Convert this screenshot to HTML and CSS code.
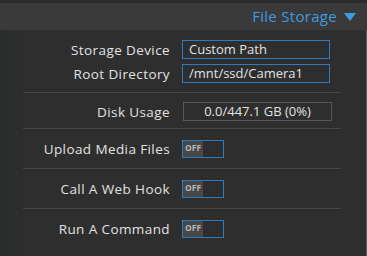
FILE: index.html
```html
<!DOCTYPE html>
<html lang="en">
<head>
    <meta charset="UTF-8">
    <title>File Storage</title>
    <link rel="stylesheet" href="styles.css">
</head>
<body>
    <div class="topbar"></div>
    <div class="header">
        <span class="header-title">File Storage</span>
        <span class="caret"></span>
    </div>

    <div class="page">
        <div class="sidebar"></div>
        <div class="content">
            <div class="section first">
                <div class="row">
                    <label>Storage Device</label>
                    <div class="field">Custom Path</div>
                </div>
                <div class="row">
                    <label>Root Directory</label>
                    <div class="field">/mnt/ssd/Camera1</div>
                </div>
            </div>

            <div class="section disk">
                <div class="row">
                    <label>Disk Usage</label>
                    <div class="usage">0.0/447.1 GB (0%)</div>
                </div>
            </div>

            <div class="section toggle-row">
                <div class="row">
                    <label>Upload Media Files</label>
                    <div class="toggle"><span class="off">OFF</span></div>
                </div>
            </div>

            <div class="section toggle-row">
                <div class="row">
                    <label>Call A Web Hook</label>
                    <div class="toggle"><span class="off">OFF</span></div>
                </div>
            </div>

            <div class="section toggle-row last">
                <div class="row">
                    <label>Run A Command</label>
                    <div class="toggle"><span class="off">OFF</span></div>
                </div>
            </div>
        </div>
        <div class="edge"></div>
    </div>
</body>
</html>
```

FILE: styles.css
```css
* {
    margin: 0;
    padding: 0;
    box-sizing: border-box;
}

body {
    font-family: 'Open Sans', 'Noto Sans', sans-serif;
    background: #2e2e2e;
    color: #e2e2e2;
    width: 367px;
    height: 256px;
    overflow: hidden;
}

.topbar {
    height: 3px;
    background: #2b2b2b;
}

.header {
    height: 27px;
    background: #3a3a3a;
    display: flex;
    align-items: center;
    justify-content: flex-end;
    padding-right: 11px;
    gap: 7px;
}

.header-title {
    color: #3d9be0;
    font-size: 15px;
    letter-spacing: 0.3px;
    line-height: 1;
}

.caret {
    width: 0;
    height: 0;
    border-left: 6px solid transparent;
    border-right: 6px solid transparent;
    border-top: 8px solid #3d9be0;
}

.page {
    display: flex;
    height: 226px;
}

.sidebar {
    width: 23px;
    background: linear-gradient(90deg, #2b2b2b 0%, #2a302f 60%, #2c2c2c 100%);
}

.content {
    width: 318px;
}

.edge {
    flex: 1;
    border-right: 1px solid #5a5a5a;
}

.section {
    border-bottom: 1px solid #464646;
    display: flex;
    flex-direction: column;
}

.section.last {
    border-bottom: none;
}

.section.first {
    padding: 10px 0 9px;
    gap: 5px;
    height: 63px;
}

.section.disk {
    padding: 9px 0 7px;
    height: 36px;
}

.section.toggle-row {
    padding: 11px 0 10px;
    height: 40px;
}

.row {
    display: flex;
    align-items: center;
    gap: 12px;
}

.row label {
    width: 147px;
    text-align: right;
    font-size: 13.5px;
    letter-spacing: 0.4px;
}

.field {
    width: 148px;
    height: 19px;
    border: 1px solid #2c7cc0;
    font-size: 13px;
    line-height: 17px;
    padding-left: 6px;
}

.usage {
    width: 149px;
    height: 19px;
    margin-left: 1px;
    border: 1px solid #565656;
    font-size: 13px;
    line-height: 17px;
    text-align: center;
}

.toggle {
    width: 42px;
    height: 18px;
    border: 1px solid #2c7cc0;
    display: flex;
}

.toggle .off {
    width: 20px;
    background: #474747;
    color: #b8b8b8;
    font-size: 8.5px;
    font-weight: bold;
    line-height: 14px;
    padding-left: 2px;
}
```
